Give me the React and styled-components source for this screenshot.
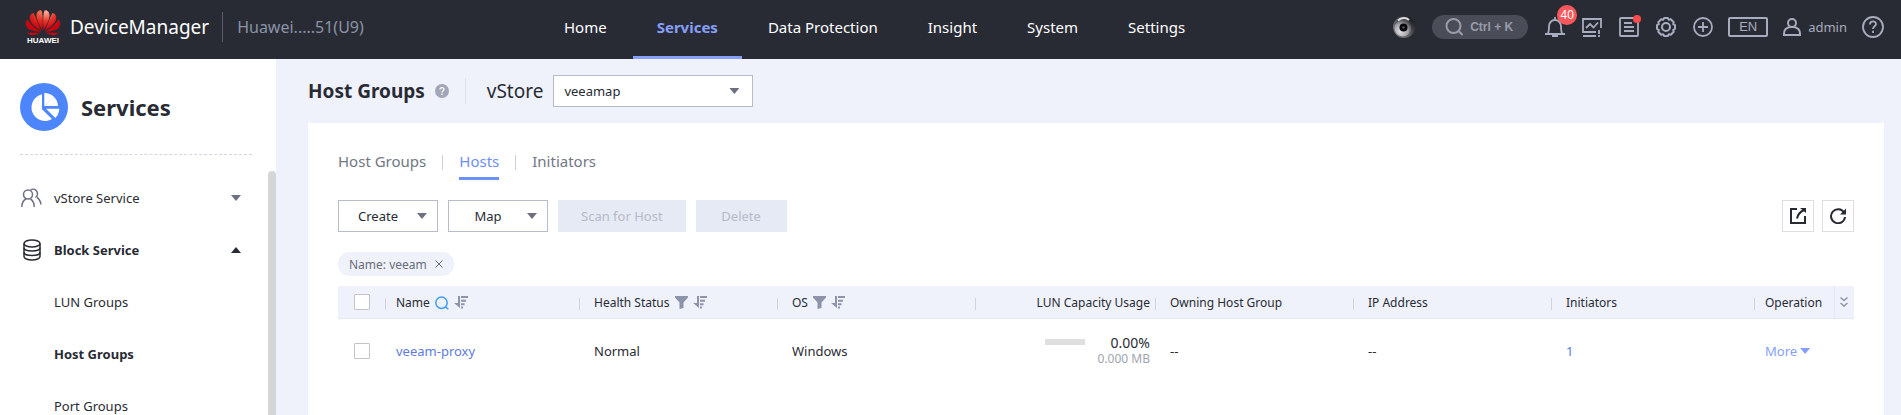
import React, { useState } from 'react';
import styled, { createGlobalStyle, css } from 'styled-components';

const GlobalStyle = createGlobalStyle`
  * {
    box-sizing: border-box;
  }

  body {
    margin: 0;
    overflow: hidden;
    background-color: #eff2fb;
    color: #282b33;
    font-family: 'Noto Sans', 'Open Sans', sans-serif;
    font-size: 13px;
  }

  button, input, select {
    font: inherit;
    color: inherit;
  }

  a {
    color: inherit;
    text-decoration: none;
  }

  svg {
    display: block;
    flex: none;
  }
`;

const Page = styled.div`
  display: flex;
  flex-direction: column;
  height: 100vh;
`;

/* ---------- top bar ---------- */

const TopBar = styled.header`
  display: flex;
  flex: none;
  height: 59px;
  padding-right: 17px;
  background-color: #292b34;
`;

const Brand = styled.div`
  display: flex;
  align-items: center;
  width: 540px;
  height: 54px;
  padding-left: 25px;
`;

const Logo = styled.div`
  display: flex;
  flex-direction: column;
  align-items: center;
  width: 36px;
  color: #fff;
  font: bold 8px/8px 'Liberation Sans', sans-serif;
`;

const ProductName = styled.span`
  margin-left: 9px;
  padding-right: 13px;
  border-right: 1px solid #575b67;
  color: #fff;
  font-size: 19px;
  line-height: 30px;
`;

const DeviceName = styled.span`
  margin-left: 14px;
  color: #8a93a6;
  font-size: 16px;
`;

const MainNav = styled.nav`
  display: flex;
  gap: 2px;
`;

const NavLink = styled.a`
  padding: 0 24px;
  border-bottom: 3px solid transparent;
  color: #fff;
  font-size: 15px;
  line-height: 54px;
  white-space: nowrap;

  ${({ $active }) => $active && css`
    border-color: #859ffa;
    color: #859ffa;
    font-weight: bold;
  `}
`;

const Tools = styled.div`
  display: flex;
  align-items: center;
  gap: 15px;
  height: 54px;
  margin-left: auto;
  color: #a7acbe;
`;

const ToolGroup = styled.div`
  display: flex;
  align-items: center;
  gap: 17px;
`;

const IconButton = styled.button`
  position: relative;
  display: flex;
  padding: 0;
  border: none;
  background: none;
  cursor: pointer;
`;

const SearchPill = styled.button`
  display: flex;
  align-items: center;
  gap: 7px;
  width: 96px;
  height: 24px;
  padding: 0 0 0 13px;
  border: none;
  border-radius: 12px;
  background-color: #4a4d58;
  color: #989caa;
  font: bold 12px 'Liberation Sans', sans-serif;
  white-space: nowrap;
  cursor: pointer;
`;

const CountBadge = styled.span`
  position: absolute;
  top: -12px;
  right: -12px;
  width: 20px;
  height: 20px;
  border-radius: 50%;
  background-color: #f8585c;
  color: #fff;
  font: 12px/20px 'Liberation Sans', sans-serif;
  text-align: center;
`;

const Dot = styled.span`
  position: absolute;
  top: -2px;
  right: -2px;
  width: 8px;
  height: 8px;
  border-radius: 50%;
  background-color: #ff4b4b;
`;

const Language = styled.button`
  width: 40px;
  height: 20px;
  padding: 0;
  border: 2px solid #a7acbe;
  border-radius: 2px;
  background: none;
  font: 13px/16px 'Liberation Sans', sans-serif;
  cursor: pointer;
`;

const User = styled.button`
  display: flex;
  align-items: center;
  gap: 7px;
  padding: 0;
  border: none;
  background: none;
  line-height: 20px;
  cursor: pointer;
`;

/* ---------- side bar ---------- */

const Body = styled.div`
  display: flex;
  flex: 1;
  min-height: 0;
`;

const Sidebar = styled.aside`
  display: flex;
  flex: none;
  flex-direction: column;
  width: 276px;
  padding: 24px 0 0 20px;
  background-color: #fff;
  overflow: hidden;
`;

const SidebarHead = styled.div`
  display: flex;
  align-items: center;
  gap: 13px;
  width: 232px;
  padding-bottom: 23px;
  border-bottom: 1px dashed #d3d6e6;
`;

const SidebarTitle = styled.h1`
  margin: 0;
  font-size: 22px;
  line-height: 48px;
`;

const MenuArea = styled.div`
  display: flex;
  flex: 1;
  min-height: 0;
  margin-top: 16px;
`;

const Menu = styled.nav`
  flex: 1;
  padding-top: 1px;
  overflow: hidden;
`;

const MenuItem = styled.a`
  display: grid;
  grid-template-columns: 34px 1fr 10px;
  align-items: center;
  width: 221px;
  height: 52px;
  font-weight: ${({ $bold }) => ($bold ? 'bold' : 'normal')};

  span {
    grid-column: 2;
  }
`;

const ScrollThumb = styled.div`
  width: 8px;
  border-radius: 4px 4px 0 0;
  background-color: #d4d6d7;
`;

const Caret = styled.i`
  display: inline-block;
  width: 10px;
  height: 6px;
  background-color: ${({ $color }) => $color || '#6c7080'};
  clip-path: ${({ $up }) => ($up
    ? 'polygon(50% 0, 100% 100%, 0 100%)'
    : 'polygon(0 0, 100% 0, 50% 100%)')};
`;

/* ---------- content ---------- */

const Content = styled.main`
  display: flex;
  flex: 1;
  flex-direction: column;
  min-width: 0;
  padding: 16px 17px 0 32px;
`;

const TitleRow = styled.div`
  display: flex;
  align-items: center;
  height: 32px;
  margin-bottom: 16px;
`;

const Title = styled.h2`
  margin: 0 10px 0 0;
  font-size: 19px;
  line-height: 32px;
`;

const TitleDivider = styled.span`
  width: 1px;
  height: 26px;
  margin: 0 21px 0 16px;
  background-color: #dde1ee;
`;

const StoreLabel = styled.label`
  margin-right: 10px;
  font-size: 19px;
  line-height: 32px;
`;

const SelectBox = styled.div`
  position: relative;

  select {
    display: block;
    width: 200px;
    height: 32px;
    padding: 0 30px 0 10px;
    border: 1px solid #b7bccd;
    border-radius: 0;
    background-color: #fff;
    appearance: none;
  }

  ${Caret} {
    position: absolute;
    top: 13px;
    right: 14px;
    pointer-events: none;
  }
`;

const Card = styled.section`
  flex: 1;
  padding: 22px 30px 0;
  background-color: #fff;
`;

const Tabs = styled.div`
  display: flex;
  align-items: center;
  gap: 16px;
`;

const Tab = styled.button`
  padding: 0;
  border: none;
  border-bottom: 3px solid ${({ $active }) => ($active ? '#6c8ff8' : 'transparent')};
  background: none;
  color: ${({ $active }) => ($active ? '#6c8ff8' : '#717784')};
  font-size: 15px;
  line-height: 32px;
  cursor: pointer;
`;

const TabDivider = styled.span`
  width: 1px;
  height: 15px;
  background-color: #ccd0de;
`;

const Toolbar = styled.div`
  display: flex;
  gap: 10px;
  margin: 20px 0;
`;

const Button = styled.button`
  min-width: 91px;
  height: 32px;
  padding: 0 23px;
  border: none;
  background-color: #e6eaf5;
  color: #b4bac9;
`;

const DropButton = styled.button`
  display: flex;
  align-items: center;
  width: 100px;
  height: 32px;
  padding: 0 10px 0 0;
  border: 1px solid #b7bccd;
  background-color: #fff;
  cursor: pointer;

  span {
    flex: 1;
  }
`;

const ToolbarEnd = styled.div`
  display: flex;
  gap: 8px;
  margin-left: auto;
`;

const SquareButton = styled.button`
  display: grid;
  place-items: center;
  width: 32px;
  height: 32px;
  padding: 0;
  border: 1px solid #dddfe2;
  background-color: #fff;
  cursor: pointer;
`;

const Chip = styled.div`
  display: inline-flex;
  align-items: center;
  gap: 8px;
  height: 24px;
  margin-bottom: 10px;
  padding: 0 11px;
  border-radius: 12px;
  background-color: #eff2fb;
  color: #686d78;
  font-size: 12px;
  vertical-align: top;
`;

const HostTable = styled.table`
  width: 100%;
  min-width: 1400px;
  border-spacing: 0;
  table-layout: fixed;
`;

const HeadCell = styled.th`
  height: 33px;
  padding: 0 6px 0 ${({ $indent = 14 }) => $indent}px;
  border-bottom: 1px solid #e3e7f3;
  background: linear-gradient(#ced3e2, #ced3e2) right 12px / 1px 12px no-repeat #eff2fb;
  font-size: 12px;
  font-weight: normal;
  text-align: ${({ $align }) => $align || 'left'};
  white-space: nowrap;

  ${({ $last }) => $last && css`
    border-left: 1px solid #e3e7f3;
  `}

  ${({ $plain }) => $plain && css`
    background: #eff2fb;
  `}
`;

const HeadLabel = styled.div`
  display: inline-flex;
  align-items: center;
  gap: 5px;
  vertical-align: middle;
`;

const Cell = styled.td`
  height: 64px;
  padding: 0 6px 0 ${({ $indent = 14 }) => $indent}px;
`;

const Checkbox = styled.input`
  display: block;
  width: 16px;
  height: 16px;
  margin: 0;
  border: 1px solid #c2c4c9;
  border-radius: 1px;
  background-color: #fff;
  appearance: none;

  &:checked {
    background-color: #6c8ff8;
  }
`;

const Link = styled.a`
  color: #5e7ce0;
`;

const MoreButton = styled.button`
  display: flex;
  align-items: center;
  gap: 3px;
  padding: 0;
  border: none;
  background: none;
  color: #859ffa;
  cursor: pointer;
`;

const Usage = styled.div`
  display: flex;
  justify-content: flex-end;
  gap: 26px;
`;

const UsageTrack = styled.div`
  width: 40px;
  height: 6px;
  margin-top: 4px;
  background-color: #dfdfdf;
`;

const UsageFill = styled.div`
  height: 100%;
  background-color: #6c8ff8;
`;

const UsageValue = styled.div`
  line-height: 16px;
  font-size: 14px;
`;

const UsageSize = styled.div`
  color: #a0a4b1;
  font-size: 12px;
  line-height: 16px;
  text-align: right;
`;

/* ---------- icons ---------- */

const Line = ({ size = 20, width = 2, children, ...rest }) => (
  <svg
    width={size}
    height={size}
    viewBox={`0 0 ${size} ${size}`}
    fill="none"
    stroke="currentColor"
    strokeWidth={width}
    aria-hidden="true"
    {...rest}
  >
    {children}
  </svg>
);

const PETALS = [
  'M18.600 21C17.800 12 18.200 4 19.500 1.500C22 0.500 24.500 3 24.600 6.500C24.600 11 21 17 18.600 21Z',
  'M19.600 21.800C24 13 26 6 27.500 4C31 4.500 32.200 8.500 30.500 12C28.500 16 23 20 19.600 21.800Z',
  'M20 22.800C27 19 32 13 34 10.500C36.200 14 35.200 18.500 31.500 20.500C28 22.300 23 22.700 20 22.800Z',
  'M20.200 23.800H33.500C32 26 29.500 26.500 27 26C24.500 25.500 22 24.600 20.200 23.800Z',
];

const PetalsIcon = () => (
  <svg width="36" height="28" viewBox="0 0 36 28" aria-hidden="true">
    <defs>
      <radialGradient id="petalsRight" gradientUnits="userSpaceOnUse" cx="21" cy="3" r="17">
        <stop offset="0" stopColor="#fbb49a" />
        <stop offset="0.55" stopColor="#e5322a" />
        <stop offset="1" stopColor="#c8040f" />
      </radialGradient>
      <radialGradient id="petalsLeft" gradientUnits="userSpaceOnUse" cx="20" cy="3" r="17">
        <stop offset="0" stopColor="#f07a5a" />
        <stop offset="0.55" stopColor="#e0261f" />
        <stop offset="1" stopColor="#c8040f" />
      </radialGradient>
    </defs>
    <g fill="url(#petalsRight)">
      {PETALS.map((d) => <path key={d} d={d} />)}
    </g>
    <g fill="url(#petalsLeft)" transform="matrix(-1 0 0 1 36 0)">
      {PETALS.map((d) => <path key={d} d={d} />)}
    </g>
  </svg>
);

const EyeIcon = () => (
  <svg width="22" height="22" viewBox="0 0 22 22" aria-hidden="true">
    <defs>
      <linearGradient id="eyeRim" x1="0" y1="1" x2="1" y2="0">
        <stop offset="0" stopColor="#8b8b8f" />
        <stop offset="0.5" stopColor="#55565a" />
        <stop offset="1" stopColor="#08080a" />
      </linearGradient>
      <radialGradient id="eyeBall" cx="0.35" cy="0.7" r="0.7">
        <stop offset="0" stopColor="#e2e1e6" />
        <stop offset="0.6" stopColor="#a5a4aa" />
        <stop offset="1" stopColor="#4a4a4e" />
      </radialGradient>
    </defs>
    <circle cx="11" cy="11" r="11" fill="url(#eyeRim)" />
    <circle cx="10" cy="12" r="8.5" fill="url(#eyeBall)" />
    <path d="M5 4.5C8 1.5 13 1 16 4" stroke="#dcdce0" strokeWidth="2" fill="none" />
    <circle cx="10.5" cy="11.5" r="4" fill="#08080a" />
    <circle cx="10.5" cy="11.5" r="1.2" fill="#55565a" />
  </svg>
);

const BellIcon = () => (
  <Line width={1.8}>
    <path d="M0 17h20M2.500 17c1.500-1.500 1.500-4 1.500-8a6 6 0 0 1 12 0c0 4 0 6.500 1.500 8" />
    <path d="M10 0v3M7 19h6" />
  </Line>
);

const ChartIcon = () => (
  <Line width={1.8}>
    <path d="M14 15H1V2h18v9M1 19h13" />
    <path d="M4 11l4-4 3.500 3.500 4.500-5M17 13v4M17 18v2" />
  </Line>
);

const ListIcon = () => (
  <Line width={1.8}>
    <rect x="1" y="1" width="18" height="18" rx="1" />
    <path d="M5 6h8M5 10h10M5 14h10" />
  </Line>
);

const GearIcon = () => (
  <Line>
    <circle cx="10" cy="10" r="4" />
    <path
      strokeLinejoin="round"
      d="M8.200 1h3.600l1 1.800 2-.5 2.900 2.900-.5 2L19 8.200v3.600l-1.800 1 .5 2-2.900 2.900-2-.5-1 1.800H8.200l-1-1.800-2 .5-2.900-2.900.5-2-1.800-1V8.200l1.800-1-.5-2 2.900-2.900 2 .5z"
    />
  </Line>
);

const PlusIcon = () => (
  <Line width={1.8}>
    <circle cx="10" cy="10" r="9" />
    <path d="M10 5v10M5 10h10" />
  </Line>
);

const UserIcon = () => (
  <Line size={18}>
    <circle cx="9" cy="5" r="4" />
    <path d="M1 17v-1.500c0-4 3-6.500 8-6.500s8 2.500 8 6.500V17z" />
  </Line>
);

const HelpIcon = () => (
  <Line size={22} width={1.8}>
    <circle cx="11" cy="11" r="10" />
    <path d="M8 8.500c0-4 6-4 6-.5 0 2.200-3 2.300-3 5M11 14.800V17" />
  </Line>
);

const ServicesIcon = () => (
  <svg width="48" height="48" viewBox="0 0 48 48" aria-hidden="true">
    <circle cx="24" cy="24" r="24" fill="#4c85fc" />
    <g fill="#fff">
      <path d="M22 11.300V26.300L32 36A13.500 13.500 0 1 1 22 11.300Z" />
      <path d="M24.300 10V23H38A13.500 13.500 0 0 0 24.300 10Z" />
      <path d="M26 25.700H39.300A13.700 13.700 0 0 1 35.300 35Z" />
    </g>
    <path d="M24.500 22.500L34 13.500" stroke="#c4d6fe" strokeWidth="0.500" />
  </svg>
);

const UsersIcon = () => (
  <Line size={22} width={1.5} color="#6c7080">
    <circle cx="8" cy="7.500" r="4.500" />
    <path d="M1.800 20c0-4 1.500-6.500 4-8M10.500 12c2.500 1.500 3.700 4 3.700 8" />
    <path d="M10.500 3a4.500 4.500 0 1 1 5 7.500M17 10.500c2.500 1.500 3.500 4 4 7" />
  </Line>
);

const DiskIcon = () => (
  <Line size={22} width={1.5}>
    <ellipse cx="12" cy="4.500" rx="8" ry="3.500" />
    <path d="M4 4.500v13c0 2 3.600 3.500 8 3.500s8-1.500 8-3.500v-13" />
    <path d="M4 8.800c0 2 3.600 3.200 8 3.200s8-1.200 8-3.200M4 13.300c0 2 3.600 3.200 8 3.200s8-1.200 8-3.200" />
  </Line>
);

const SortIcon = () => (
  <svg width="14" height="13" viewBox="0 0 14 13" fill="#8d93a8" aria-hidden="true">
    <path d="M4 0h2v12L0 7h4zM7 0h7v2H7zM7 3.700h5v2H7zM7 7.300h3.500v2H7zM7 10.500h2v2H7z" />
  </svg>
);

const FilterIcon = () => (
  <svg width="13" height="13" viewBox="0 0 13 13" fill="#8d93a8" aria-hidden="true">
    <path d="M0 0h13v1.500L8.500 6.500V12l-4 1V6.500L0 1.500z" />
  </svg>
);

const FindIcon = () => (
  <Line size={14} width={1.5} color="#3d9bf5">
    <circle cx="6.500" cy="6.800" r="5.700" />
    <path d="M10.500 10.800l2.800 2.500" />
  </Line>
);

const ICONS = { find: FindIcon, filter: FilterIcon, sort: SortIcon };

/* ---------- data ---------- */

const NAV = ['Home', 'Services', 'Data Protection', 'Insight', 'System', 'Settings'];

const TABS = ['Host Groups', 'Hosts', 'Initiators'];

const COLUMNS = [
  { title: 'Name', icons: ['find', 'sort'], width: 194, indent: 10 },
  { title: 'Health Status', icons: ['filter', 'sort'], width: 198 },
  { title: 'OS', icons: ['filter', 'sort'], width: 198 },
  { title: 'LUN Capacity Usage', width: 180, align: 'right' },
  { title: 'Owning Host Group', width: 198 },
  { title: 'IP Address', width: 198 },
  { title: 'Initiators' },
];

const HOSTS = [
  {
    name: 'veeam-proxy',
    health: 'Normal',
    os: 'Windows',
    usage: 0,
    size: '0.000 MB',
    group: '--',
    ip: '--',
    initiators: 1,
  },
];

const Header = () => (
  <TopBar>
    <Brand>
      <Logo>
        <PetalsIcon />
        HUAWEI
      </Logo>
      <ProductName>DeviceManager</ProductName>
      <DeviceName>Huawei.....51(U9)</DeviceName>
    </Brand>
    <MainNav>
      {NAV.map((item) => (
        <NavLink key={item} href="#" $active={item === 'Services'}>{item}</NavLink>
      ))}
    </MainNav>
    <Tools>
      <ToolGroup>
        <IconButton aria-label="Assistant"><EyeIcon /></IconButton>
        <SearchPill>
          <Line size={18} width={2}>
            <circle cx="8.500" cy="8" r="7" />
            <path d="M13.500 13l4 4" />
          </Line>
          Ctrl + K
        </SearchPill>
        <IconButton aria-label="Alarms">
          <BellIcon />
          <CountBadge>40</CountBadge>
        </IconButton>
        <IconButton aria-label="Performance"><ChartIcon /></IconButton>
        <IconButton aria-label="Tasks">
          <ListIcon />
          <Dot />
        </IconButton>
        <IconButton aria-label="Configuration"><GearIcon /></IconButton>
        <IconButton aria-label="Add"><PlusIcon /></IconButton>
      </ToolGroup>
      <Language>EN</Language>
      <User>
        <UserIcon />
        admin
      </User>
      <IconButton aria-label="Help"><HelpIcon /></IconButton>
    </Tools>
  </TopBar>
);

const SideMenu = () => (
  <Sidebar>
    <SidebarHead>
      <ServicesIcon />
      <SidebarTitle>Services</SidebarTitle>
    </SidebarHead>
    <MenuArea>
      <Menu>
        <MenuItem href="#">
          <UsersIcon />
          <span>vStore Service</span>
          <Caret />
        </MenuItem>
        <MenuItem href="#" $bold>
          <DiskIcon />
          <span>Block Service</span>
          <Caret $up $color="#282b33" />
        </MenuItem>
        <MenuItem href="#"><span>LUN Groups</span></MenuItem>
        <MenuItem href="#" $bold><span>Host Groups</span></MenuItem>
        <MenuItem href="#"><span>Port Groups</span></MenuItem>
      </Menu>
      <ScrollThumb />
    </MenuArea>
  </Sidebar>
);

const HostList = () => (
  <HostTable>
    <colgroup>
      <col width="48" />
      {COLUMNS.map((column) => <col key={column.title} width={column.width} />)}
      <col width="79" />
      <col width="20" />
    </colgroup>
    <thead>
      <tr>
        <HeadCell $indent={16}><Checkbox type="checkbox" aria-label="Select all" /></HeadCell>
        {COLUMNS.map(({ title, icons = [], indent, align }) => (
          <HeadCell key={title} $indent={indent} $align={align}>
            <HeadLabel>
              {title}
              {icons.map((name) => {
                const Icon = ICONS[name];
                return <Icon key={name} />;
              })}
            </HeadLabel>
          </HeadCell>
        ))}
        <HeadCell $indent={10} $plain>Operation</HeadCell>
        <HeadCell $indent={5} $plain $last>
          <Line size={8} height="12" viewBox="0 0 8 12" width={1.5} color="#8d93a8">
            <path d="M0.500 1.500L4 4.500l3.500-3M0.500 7L4 10l3.500-3" />
          </Line>
        </HeadCell>
      </tr>
    </thead>
    <tbody>
      {HOSTS.map((host) => (
        <tr key={host.name}>
          <Cell $indent={16}><Checkbox type="checkbox" aria-label={host.name} /></Cell>
          <Cell $indent={10}><Link href="#">{host.name}</Link></Cell>
          <Cell>{host.health}</Cell>
          <Cell>{host.os}</Cell>
          <Cell>
            <Usage>
              <UsageTrack><UsageFill style={{ width: `${host.usage}%` }} /></UsageTrack>
              <UsageValue>{host.usage.toFixed(2)}%</UsageValue>
            </Usage>
            <UsageSize>{host.size}</UsageSize>
          </Cell>
          <Cell>{host.group}</Cell>
          <Cell>{host.ip}</Cell>
          <Cell><Link href="#">{host.initiators}</Link></Cell>
          <Cell $indent={10}>
            <MoreButton>More <Caret $color="#859ffa" /></MoreButton>
          </Cell>
          <Cell />
        </tr>
      ))}
    </tbody>
  </HostTable>
);

const App = () => {
  const [tab, setTab] = useState('Hosts');
  const [filtered, setFiltered] = useState(true);

  return (
    <Page>
      <GlobalStyle />
      <Header />
      <Body>
        <SideMenu />
        <Content>
          <TitleRow>
            <Title>Host Groups</Title>
            <svg width="14" height="14" viewBox="0 0 14 14" aria-hidden="true">
              <circle cx="7" cy="7" r="7" fill="#a1a6b8" />
              <path d="M5 5.600c0-2.600 4-2.600 4-.3C9 6.800 7 6.700 7 8.500M7 9.500V11" fill="none" stroke="#fff" strokeWidth="1.300" />
            </svg>
            <TitleDivider />
            <StoreLabel htmlFor="vstore">vStore</StoreLabel>
            <SelectBox>
              <select id="vstore">
                <option>veeamap</option>
              </select>
              <Caret />
            </SelectBox>
          </TitleRow>
          <Card>
            <Tabs>
              {TABS.map((name, index) => (
                <React.Fragment key={name}>
                  {index > 0 && <TabDivider />}
                  <Tab $active={name === tab} onClick={() => setTab(name)}>{name}</Tab>
                </React.Fragment>
              ))}
            </Tabs>
            <Toolbar>
              <DropButton><span>Create</span><Caret /></DropButton>
              <DropButton><span>Map</span><Caret /></DropButton>
              <Button disabled>Scan for Host</Button>
              <Button disabled>Delete</Button>
              <ToolbarEnd>
                <SquareButton aria-label="Export">
                  <Line size={16}>
                    <path d="M7 1H1v14h14V8M7 10.500C7.500 7 10 4 14 2" />
                    <path d="M10 0h6v5z" fill="currentColor" stroke="none" />
                  </Line>
                </SquareButton>
                <SquareButton aria-label="Refresh">
                  <Line size={16}>
                    <path d="M14 4.500A7 7 0 1 0 15 9" />
                    <path d="M16 0.500v6h-6z" fill="currentColor" stroke="none" />
                  </Line>
                </SquareButton>
              </ToolbarEnd>
            </Toolbar>
            {filtered && (
              <Chip>
                Name: veeam
                <IconButton aria-label="Remove filter" onClick={() => setFiltered(false)}>
                  <Line size={8} width={1}>
                    <path d="M0.500 0.500l7 7M7.500 0.500l-7 7" />
                  </Line>
                </IconButton>
              </Chip>
            )}
            <HostList />
          </Card>
        </Content>
      </Body>
    </Page>
  );
};

export default App;
